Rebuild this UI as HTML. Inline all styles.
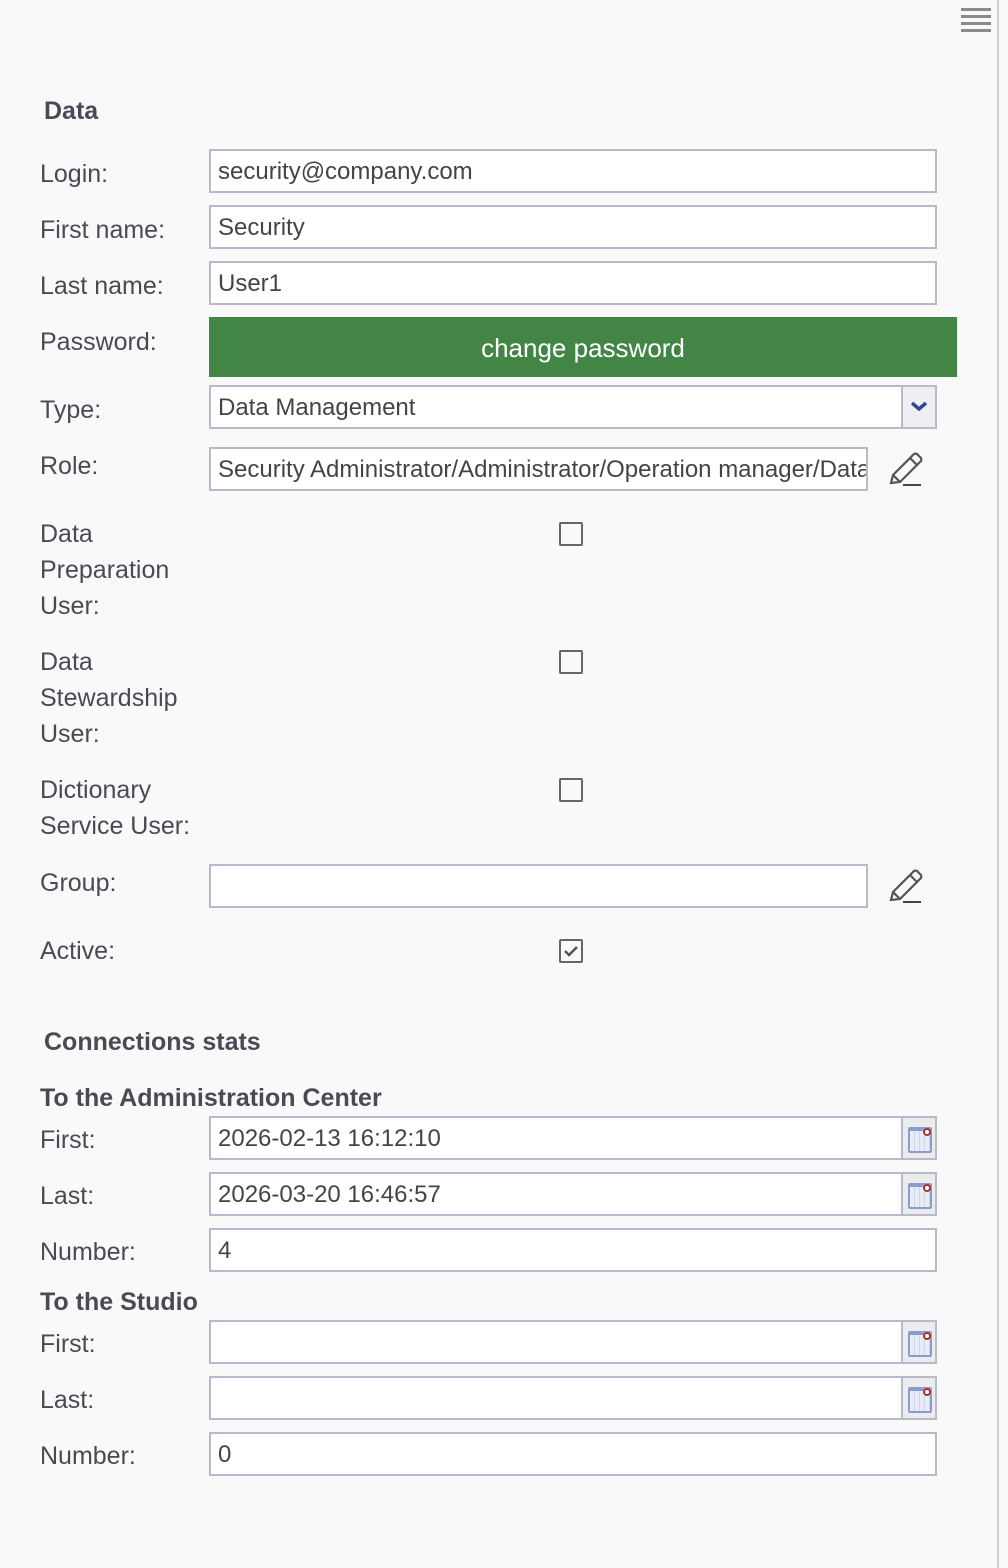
<!DOCTYPE html><html><head><meta charset="utf-8"><style>
body{margin:0;width:1008px;height:1568px;background:#f9f9f9;font-family:"Liberation Sans",sans-serif;color:#4a4a55;position:relative;overflow:hidden}
.a{position:absolute}
.l{position:absolute;left:40px;font-size:25px;line-height:36px}
.h{position:absolute;font-weight:bold;font-size:25px;color:#4a4a55}
.i{position:absolute;left:209px;width:724px;height:40px;border:2px solid #b8b9cc;background:#fff;font-size:24px;line-height:42px;padding-left:7px;box-sizing:content-box;white-space:nowrap;overflow:hidden;color:#444}
.cb{position:absolute;left:559px;width:20px;height:20px;border:2px solid #666;border-radius:2px}
.cal{position:absolute;right:0;top:0;width:32px;height:40px;background:#ececec;border-left:2px solid #b8b9cc}
.cal:after{content:"";position:absolute;left:5px;top:9px;width:20px;height:20px;border:2px solid #8a9ccc;background:repeating-linear-gradient(90deg,#e8ecf6 0 4px,#d0d6e6 4px 5px);border-top-width:4px;border-radius:2px}
.cal:before{content:"";position:absolute;left:20px;top:10px;width:4px;height:4px;border:2px solid #b03030;border-radius:50%;z-index:2;background:#fff}
</style></head><body>
<div class="a" style="left:997px;top:0;width:2px;height:1568px;background:#d0d0d0"></div>
<div class="a" style="left:961px;top:8px;width:30px;height:28px;background:repeating-linear-gradient(#8a8a8a 0 3px,transparent 3px 7px)"></div>
<div class="h" style="left:44px;top:97px">Data</div>
<div class="l" style="top:156px">Login:</div><div class="i" style="top:149px;width:717px">security@company.com</div>
<div class="l" style="top:212px">First name:</div><div class="i" style="top:205px;width:717px">Security</div>
<div class="l" style="top:268px">Last name:</div><div class="i" style="top:261px;width:717px">User1</div>
<div class="l" style="top:324px">Password:</div>
<div class="a" style="left:209px;top:317px;width:748px;height:60px;background:#438544;color:#fff;font-size:26px;text-align:center;line-height:62px">change password</div>
<div class="l" style="top:392px">Type:</div>
<div class="i" style="top:385px;width:717px">Data Management<div class="a" style="right:0;top:0;width:32px;height:40px;background:#efeff3;border-left:2px solid #b8b9cc"><svg width="32" height="40"><path d="M9 16l7 6 7-6" stroke="#2d4a8a" stroke-width="3.5" fill="none"/></svg></div></div>
<div class="l" style="top:448px">Role:</div><div class="i" style="top:447px;width:648px">Security Administrator/Administrator/Operation manager/Data</div>
<svg class="a" style="left:880px;top:450px" width="50" height="45"><path d="M11 33l2-8 20-20a3 3 0 0 1 5 0l2 2a3 3 0 0 1 0 5l-20 20z M13 25l7 7 M30 8l7 7" stroke="#555" stroke-width="2.2" fill="none"/><path d="M23 35h18" stroke="#444" stroke-width="2"/></svg>
<div class="l" style="top:516px">Data<br>Preparation<br>User:</div><div class="cb" style="top:522px"></div>
<div class="l" style="top:644px">Data<br>Stewardship<br>User:</div><div class="cb" style="top:650px"></div>
<div class="l" style="top:772px">Dictionary<br>Service User:</div><div class="cb" style="top:778px"></div>
<div class="l" style="top:865px">Group:</div><div class="i" style="top:864px;width:648px"></div>
<svg class="a" style="left:880px;top:867px" width="50" height="45"><path d="M11 33l2-8 20-20a3 3 0 0 1 5 0l2 2a3 3 0 0 1 0 5l-20 20z M13 25l7 7 M30 8l7 7" stroke="#555" stroke-width="2.2" fill="none"/><path d="M23 35h18" stroke="#444" stroke-width="2"/></svg>
<div class="l" style="top:933px">Active:</div><div class="cb" style="top:939px"><svg width="20" height="20" class="a"><path d="M4 10l4 4 8-8" stroke="#555" stroke-width="2.5" fill="none"/></svg></div>
<div class="h" style="left:44px;top:1028px">Connections stats</div>
<div class="h" style="left:40px;top:1084px">To the Administration Center</div>
<div class="l" style="top:1122px">First:</div><div class="i" style="top:1116px;width:717px">2026-02-13 16:12:10<div class="cal"></div></div>
<div class="l" style="top:1178px">Last:</div><div class="i" style="top:1172px;width:717px">2026-03-20 16:46:57<div class="cal"></div></div>
<div class="l" style="top:1234px">Number:</div><div class="i" style="top:1228px;width:717px">4</div>
<div class="h" style="left:40px;top:1288px">To the Studio</div>
<div class="l" style="top:1326px">First:</div><div class="i" style="top:1320px;width:717px"><div class="cal"></div></div>
<div class="l" style="top:1382px">Last:</div><div class="i" style="top:1376px;width:717px"><div class="cal"></div></div>
<div class="l" style="top:1438px">Number:</div><div class="i" style="top:1432px;width:717px">0</div>
</body></html>
